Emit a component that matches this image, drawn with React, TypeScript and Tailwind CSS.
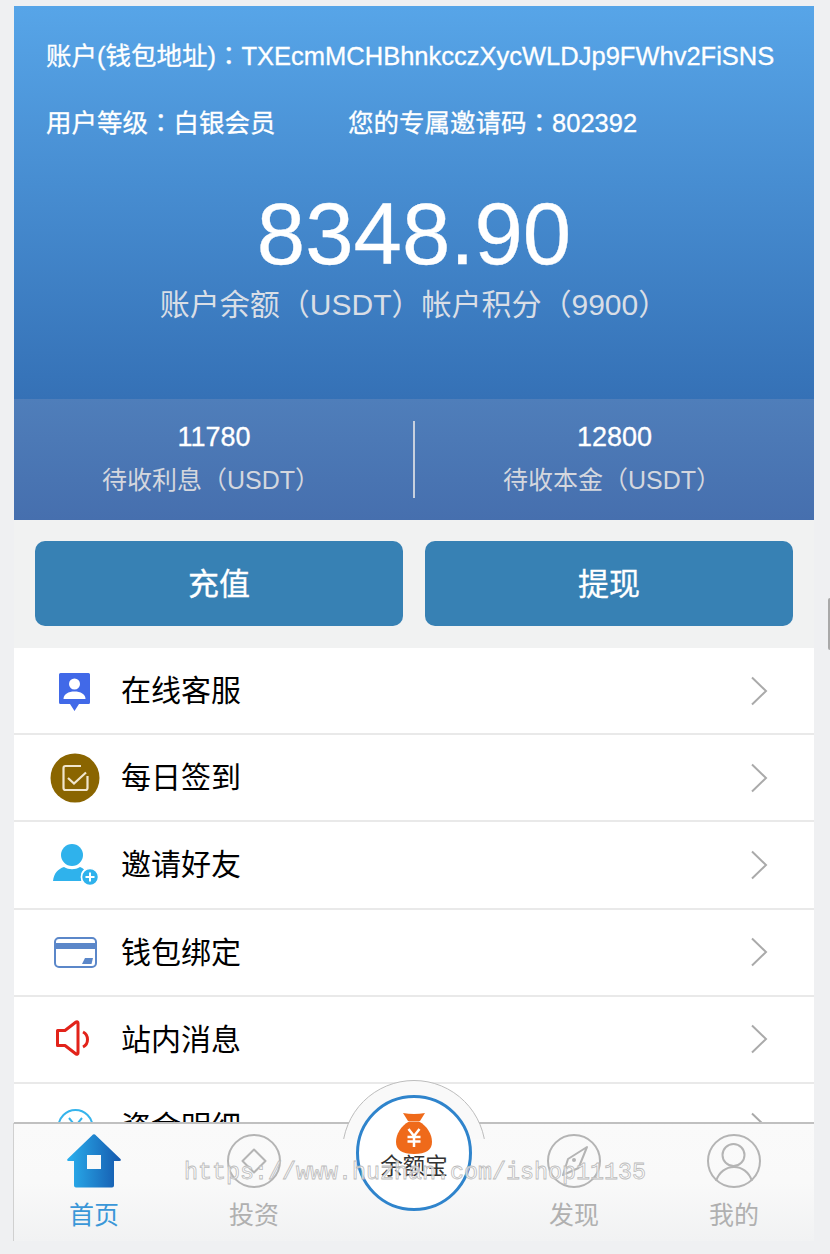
import React from "react";

const sans = "font-['Liberation_Sans','Noto_Sans_CJK_SC',sans-serif]";
const colon = "font-['Noto_Sans_CJK_TC',sans-serif]";

function Chevron() {
  return (
    <svg width="20" height="30" viewBox="0 0 20 30" fill="none" className="shrink-0">
      <path d="M3 1.500 L17 15 L3 28.500" stroke="#aaaaaa" strokeWidth="2" />
    </svg>
  );
}

const icons: Record<string, React.ReactNode> = {
  kefu: (
    <svg width="50" height="50" viewBox="0 0 50 50">
      <path d="M9 8.500a1.500 1.500 0 0 1 1.500-1.500h28a1.500 1.500 0 0 1 1.500 1.500v28a1.500 1.500 0 0 1-1.500 1.500H29l-4.500 7-4.500-7h-9.500a1.500 1.500 0 0 1-1.500-1.500z" fill="#4169e8" />
      <circle cx="24.500" cy="18" r="5.500" fill="#fff" />
      <path d="M13.500 33c0-5 5-7.500 11-7.500s11 2.500 11 7.500z" fill="#fff" />
    </svg>
  ),
  sign: (
    <svg width="50" height="50" viewBox="0 0 50 50">
      <circle cx="25" cy="25" r="24.500" fill="#8a6500" />
      <path d="M31 13H15.500a2 2 0 0 0-2 2v20a2 2 0 0 0 2 2h20a2 2 0 0 0 2-2V23" fill="none" stroke="#f1e6cd" strokeWidth="2.200" />
      <path d="M18 25l6 5.500 12-11" fill="none" stroke="#f1e6cd" strokeWidth="2.200" />
    </svg>
  ),
  invite: (
    <svg width="50" height="50" viewBox="0 0 50 50">
      <circle cx="22" cy="15" r="11" fill="#2fb2ec" />
      <path d="M3 41c1-8 5-12 11-14 5 3 11 3 16 0 1.500.5 3 1.500 4 2.500-3 2-4 7-2.500 11.500z" fill="#2fb2ec" />
      <circle cx="40" cy="37" r="8.500" fill="#2fb2ec" stroke="#fff" strokeWidth="1.500" />
      <path d="M40 32.500v9M35.500 37h9" stroke="#fff" strokeWidth="2" />
    </svg>
  ),
  wallet: (
    <svg width="50" height="50" viewBox="0 0 50 50">
      <rect x="5" y="11" width="41" height="29" rx="4" fill="none" stroke="#5b87c9" strokeWidth="2" />
      <rect x="5" y="16" width="41" height="6" fill="#5b87c9" />
      <path d="M32 37l3-6h8l-1.500 6z" fill="#5b87c9" />
    </svg>
  ),
  msg: (
    <svg width="50" height="50" viewBox="0 0 50 50">
      <path d="M7.500 16.500h7.500l11-8.500c1-.7 2-.2 2 1v30c0 1.200-1 1.700-2 1l-11-8.500H7.500z" fill="none" stroke="#e2231a" strokeWidth="3" strokeLinejoin="round" />
      <path d="M33 18c6 3 6 12 0 15" fill="none" stroke="#e2231a" strokeWidth="3" />
    </svg>
  ),
  funds: (
    <svg width="50" height="50" viewBox="0 0 50 50">
      <circle cx="25.500" cy="25" r="17" fill="none" stroke="#36b4ec" strokeWidth="2" />
      <path d="M19 16l6.500 8 6.500-8M18.500 25h14M18.500 30h14M25.500 24v12" fill="none" stroke="#36b4ec" strokeWidth="2" />
    </svg>
  ),
};

const rows = [
  ["kefu", "在线客服"],
  ["sign", "每日签到"],
  ["invite", "邀请好友"],
  ["wallet", "钱包绑定"],
  ["msg", "站内消息"],
  ["funds", "资金明细"],
];

function HomeIcon() {
  return (
    <svg width="56" height="56" viewBox="0 0 56 56">
      <defs>
        <linearGradient id="hg" x1="0" x2="1" y1="0" y2="0">
          <stop offset="0" stopColor="#2ab0ee" />
          <stop offset="1" stopColor="#1558ad" />
        </linearGradient>
      </defs>
      <path fillRule="evenodd" d="M27 1.500a2 2 0 0 1 2 0L54.500 26c.800 1 .3 2-1 2H48v24.500a2 2 0 0 1-2 2H10a2 2 0 0 1-2-2V28H2.500c-1.300 0-1.800-1-1-2zM21 22v14h14V22z" fill="url(#hg)" />
    </svg>
  );
}

function InvestIcon() {
  return (
    <svg width="56" height="56" viewBox="0 0 56 56" fill="none" stroke="#b4b4b4" strokeWidth="2">
      <circle cx="28" cy="28" r="26" />
      <path d="M28 16.500L39.500 28 28 39.500 16.500 28z" strokeLinejoin="round" />
    </svg>
  );
}

function CompassIcon() {
  return (
    <svg width="56" height="56" viewBox="0 0 56 56" fill="none" stroke="#b4b4b4" strokeWidth="2">
      <circle cx="28" cy="28" r="26" />
      <path d="M41 14L32.500 35 17 42 22 26z" strokeLinejoin="round" />
      <circle cx="28" cy="27" r="2" fill="#b4b4b4" stroke="none" />
    </svg>
  );
}

function UserIcon() {
  return (
    <svg width="56" height="56" viewBox="0 0 56 56" fill="none" stroke="#b4b4b4" strokeWidth="2">
      <circle cx="28" cy="28" r="26" />
      <circle cx="27.500" cy="22" r="11" />
      <path d="M10 48c3-9 10-14 18-14s15 5 18 14" />
    </svg>
  );
}

function BagIcon() {
  return (
    <svg width="36" height="42" viewBox="0 0 36 42">
      <path d="M7 1Q18 3 29 1L24 9H12z" fill="#ef6a1a" />
      <path d="M13 9.500H23C31 14 36 22 36 30 36 38 30 42 18 42 6 42 0 38 0 30 0 22 5 14 13 9.500z" fill="#ef6a1a" />
      <path d="M12.500 17l5.500 7 5.500-7M11.500 25h13M11.500 29.500h13M18 24v11" fill="none" stroke="#fff" strokeWidth="2.500" />
    </svg>
  );
}

function Tab({ icon, label, active }: { icon: React.ReactNode; label: string; active?: boolean }) {
  return (
    <div className="w-[160px] flex flex-col items-center pt-[9px]">
      {icon}
      <div className={`text-[25px] leading-[36px] mt-[8px] ${active ? "text-[#3a97d8]" : "text-[#b0b0b0]"}`}>{label}</div>
    </div>
  );
}

export default function App() {
  return (
    <div className={`relative w-[830px] h-[1254px] overflow-hidden bg-[#eff0f2] pt-[6px] ${sans}`}>
      <div className="relative mx-[14px] w-[800px] h-[1235px] flex flex-col bg-[#f1f2f2] overflow-hidden">
        <div className="h-[393px] shrink-0 bg-gradient-to-b from-[#57a5e8] to-[#3571b6] pl-[32px] pt-[31px] text-white [-webkit-text-stroke:0.3px_#ffffff]">
          <div className="text-[25.500px] leading-[34px] whitespace-nowrap">账户(钱包地址)<span className={colon}>：</span>TXEcmMCHBhnkcczXycWLDJp9FWhv2FiSNS</div>
          <div className="text-[25.500px] leading-[34px] mt-[31px] whitespace-nowrap flex">
            <span className="w-[302px]">用户等级<span className={colon}>：</span>白银会员</span>
            <span>您的专属邀请码<span className={colon}>：</span>802392</span>
          </div>
          <div className="text-[87px] leading-[98px] mt-[45px] -ml-[32px] text-center">8348.90</div>
          <div className="text-[30px] leading-[40px] mt-[2px] -ml-[32px] text-center text-[#d9dee6] [-webkit-text-stroke:0px]">账户余额（USDT）帐户积分（9900）</div>
        </div>

        <div className="h-[121px] shrink-0 bg-gradient-to-b from-[#4f7eba] to-[#466fae] flex items-center">
          <div className="w-[400px] text-center">
            <div className="text-[27px] leading-[34px] text-white -mt-[2px] [-webkit-text-stroke:0.3px_#ffffff]">11780</div>
            <div className="text-[25px] leading-[34px] mt-[9px] text-[#d4d7de] pr-[6px]">待收利息（USDT）</div>
          </div>
          <div className="w-[2px] h-[77px] shrink-0 bg-[#c7d0de] -ml-[1px]" />
          <div className="flex-1 text-center">
            <div className="text-[27px] leading-[34px] text-white -mt-[2px] [-webkit-text-stroke:0.3px_#ffffff]">12800</div>
            <div className="text-[25px] leading-[34px] mt-[9px] text-[#d4d7de] pr-[5px]">待收本金（USDT）</div>
          </div>
        </div>

        <div className="h-[128px] shrink-0 flex items-start pt-[21px] gap-[22px] px-[21px]">
          <div className="flex-1 h-[85px] pt-[3px] rounded-[10px] bg-[#3781b4] text-white text-[31px] flex items-center justify-center [-webkit-text-stroke:0.3px_#ffffff]">充值</div>
          <div className="flex-1 h-[85px] pt-[3px] rounded-[10px] bg-[#3781b4] text-white text-[31px] flex items-center justify-center [-webkit-text-stroke:0.3px_#ffffff]">提现</div>
        </div>

        <div className="flex-1 min-h-0 overflow-hidden bg-white">
          {rows.map(([k, label]) => (
            <div key={k} className="h-[87.200px] flex items-center border-b-2 border-[#e9e9e9] pl-[36px] pr-[45px]">
              <div className="w-[50px] h-[50px] shrink-0">{icons[k]}</div>
              <div className="flex-1 ml-[21px] text-[30px] text-black">{label}</div>
              <Chevron />
            </div>
          ))}
        </div>

        <div className="h-[119px] shrink-0 border-t-2 border-[#c0c0c0] bg-gradient-to-b from-[#fafafa] via-[#f9f9f9] to-[#f1f2f3] flex">
          <Tab icon={<HomeIcon />} label="首页" active />
          <Tab icon={<InvestIcon />} label="投资" />
          <div className="w-[160px]" />
          <Tab icon={<CompassIcon />} label="发现" />
          <Tab icon={<UserIcon />} label="我的" />
        </div>

        {/* raised centre button */}
        <div className="absolute left-[328px] top-[1074px] w-[144px] h-[144px] rounded-full border-[1.500px] border-[#bdbdbd] bg-[#f9f9f9] [clip-path:inset(0_0_85px_0)]" />
        <div className="absolute left-[342px] top-[1089px] w-[116px] h-[116px] rounded-full bg-white border-[3px] border-[#2f84cc] flex flex-col items-center pt-[14px]">
          <BagIcon />
          <div className="text-[22.500px] leading-[26px] text-[#333] mt-[0px]">余额宝</div>
        </div>
      </div>

      {/* tab bar left edge line */}
      <div className="absolute left-[13px] top-[1123px] w-px h-[118px] bg-[#d0d0d0]" />

      {/* watermark */}
      <div className="absolute left-[184px] top-[1158px] font-['Liberation_Mono',monospace] text-[23.330px] leading-[30px] text-[#ffffffb0] whitespace-nowrap [-webkit-text-stroke:0.8px_#bbbbbb]">https://www.huzhan.com/ishop11135</div>

      {/* page scrollbar thumb */}
      <div className="absolute left-[828px] top-[598px] w-[2px] h-[52px] rounded-l bg-[#a9a9a9]" />
    </div>
  );
}
